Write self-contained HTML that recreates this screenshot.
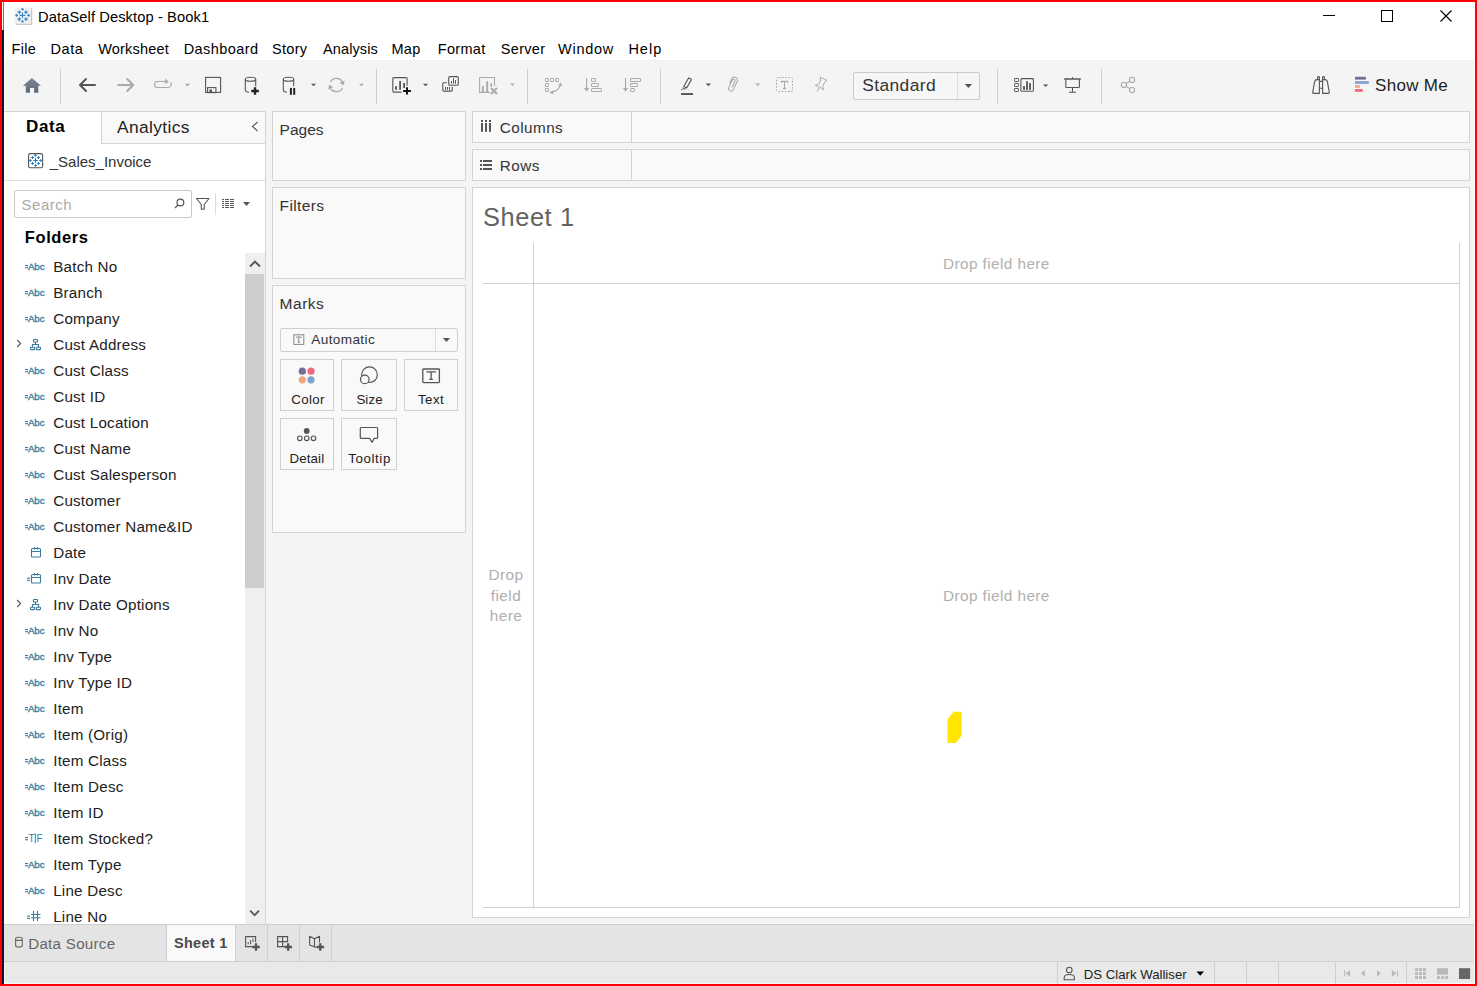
<!DOCTYPE html>
<html><head><meta charset="utf-8"><title>DataSelf Desktop - Book1</title>
<style>
html,body{margin:0;padding:0;}
body{width:1477px;height:986px;position:relative;overflow:hidden;font-family:"Liberation Sans", sans-serif;background:#fff;}
body>div{position:absolute;box-sizing:content-box;}
</style></head><body>
<div style="left:0px;top:0px;width:1477px;height:986px;background:#ffffff;"></div>
<div style="left:5px;top:60px;width:1469px;height:864px;background:#f4f4f4;"></div>
<div style="left:5px;top:60px;width:1469px;height:1px;background:#f0f0f0;"></div>
<svg style="position:absolute;left:14px;top:7px;" width="20" height="20" viewBox="0 0 20 20"><rect x="1.6" y="1.5" width="16.6" height="16.3" fill="#bdbdbd"/><rect x="0.6" y="0.5" width="16.6" height="16.3" fill="#f0f0f0"/><g stroke="#3f86c0" stroke-width="1.1"><path d="M8.5 5.6 V11.2 M5.7 8.4 H11.3"/></g><g stroke="#3f86c0" stroke-width="1.2"><path d="M8.5 0.9999999999999998 V3.5999999999999996 M7.2 2.3 H9.8"/><path d="M8.5 13.2 V15.8 M7.2 14.5 H9.8"/><path d="M2.6 7.1000000000000005 V9.700000000000001 M1.3 8.4 H3.9000000000000004"/><path d="M14.6 7.1000000000000005 V9.700000000000001 M13.299999999999999 8.4 H15.9"/><path d="M5.3 3.4000000000000004 V7.0 M3.5 5.2 H7.1"/><path d="M12 3.4000000000000004 V7.0 M10.2 5.2 H13.8"/><path d="M5.3 10.299999999999999 V13.9 M3.5 12.1 H7.1"/><path d="M12 10.299999999999999 V13.9 M10.2 12.1 H13.8"/></g></svg>
<div style="left:38px;top:9.90px;font-size:14.7px;line-height:1;color:#000;font-weight:400;white-space:nowrap;letter-spacing:0.09px;">DataSelf Desktop - Book1</div>
<svg style="position:absolute;left:1322px;top:8px;" width="14" height="14" viewBox="0 0 14 14"><rect x="1" y="7" width="12" height="1" fill="#000"/></svg>
<svg style="position:absolute;left:1380px;top:9px;" width="14" height="14" viewBox="0 0 14 14"><rect x="1.5" y="1.5" width="11" height="11" fill="none" stroke="#000" stroke-width="1"/></svg>
<svg style="position:absolute;left:1439px;top:9px;" width="14" height="14" viewBox="0 0 14 14"><path d="M1.5 1.5 L12.5 12.5 M12.5 1.5 L1.5 12.5" stroke="#000" stroke-width="1.1"/></svg>
<div style="left:11.5px;top:41.88px;font-size:14.5px;line-height:1;color:#000;font-weight:400;white-space:nowrap;letter-spacing:0.3px;">File</div>
<div style="left:50.5px;top:41.88px;font-size:14.5px;line-height:1;color:#000;font-weight:400;white-space:nowrap;letter-spacing:0.6px;">Data</div>
<div style="left:98.2px;top:41.88px;font-size:14.5px;line-height:1;color:#000;font-weight:400;white-space:nowrap;letter-spacing:0.2px;">Worksheet</div>
<div style="left:183.70000000000002px;top:41.88px;font-size:14.5px;line-height:1;color:#000;font-weight:400;white-space:nowrap;letter-spacing:0.42px;">Dashboard</div>
<div style="left:272.0px;top:41.88px;font-size:14.5px;line-height:1;color:#000;font-weight:400;white-space:nowrap;letter-spacing:0.3px;">Story</div>
<div style="left:323.0px;top:41.88px;font-size:14.5px;line-height:1;color:#000;font-weight:400;white-space:nowrap;letter-spacing:0.12px;">Analysis</div>
<div style="left:391.40000000000003px;top:41.88px;font-size:14.5px;line-height:1;color:#000;font-weight:400;white-space:nowrap;letter-spacing:0.3px;">Map</div>
<div style="left:437.8px;top:41.88px;font-size:14.5px;line-height:1;color:#000;font-weight:400;white-space:nowrap;letter-spacing:0.3px;">Format</div>
<div style="left:500.8px;top:41.88px;font-size:14.5px;line-height:1;color:#000;font-weight:400;white-space:nowrap;letter-spacing:0.3px;">Server</div>
<div style="left:558.0999999999999px;top:41.88px;font-size:14.5px;line-height:1;color:#000;font-weight:400;white-space:nowrap;letter-spacing:0.72px;">Window</div>
<div style="left:628.4px;top:41.88px;font-size:14.5px;line-height:1;color:#000;font-weight:400;white-space:nowrap;letter-spacing:1.0px;">Help</div>
<div style="left:60px;top:69px;width:1px;height:35px;background:#d0d0d0;"></div>
<div style="left:376px;top:69px;width:1px;height:35px;background:#d0d0d0;"></div>
<div style="left:527px;top:69px;width:1px;height:35px;background:#d0d0d0;"></div>
<div style="left:660px;top:69px;width:1px;height:35px;background:#d0d0d0;"></div>
<div style="left:997px;top:69px;width:1px;height:35px;background:#d0d0d0;"></div>
<div style="left:1101px;top:69px;width:1px;height:35px;background:#d0d0d0;"></div>
<svg style="position:absolute;left:0px;top:0px;" width="1477" height="112" viewBox="0 0 1477 112"><defs><linearGradient id="hg" x1="0" y1="0" x2="0" y2="1"><stop offset="0" stop-color="#7b8896"/><stop offset="1" stop-color="#5d6a78"/></linearGradient></defs><path d="M31.9 78 L41 85.7 H38.3 V92.8 H34.1 V88 H30 V92.8 H25.8 V85.7 H22.9 Z" fill="url(#hg)"/><path d="M95 85 H80.5 M86 79 L80 85 L86 91" fill="none" stroke="#555" stroke-width="2" stroke-linecap="round" stroke-linejoin="round"/><path d="M118.2 85 H132.7 M127.2 79 L133.2 85 L127.2 91" fill="none" stroke="#aaa" stroke-width="2" stroke-linecap="round" stroke-linejoin="round"/><path d="M163 81.5 H157.5 A3 3 0 0 0 157.5 87.5 H168.5 A3 3 0 0 0 170.5 82.5" fill="none" stroke="#aaa" stroke-width="1.2"/><path d="M165.3 78.6 L168.5 81.5 L165.3 84.4 Z" fill="#aaa"/><path d="M162 81.5 H166" stroke="#aaa" stroke-width="1.2"/><path d="M184.8 83.8 H190.2 L187.5 86.42499999999998 Z" fill="#aaa"/><rect x="205.6" y="77.4" width="15" height="15" fill="none" stroke="#555" stroke-width="1.1"/><rect x="207.6" y="87.6" width="8.3" height="5" fill="none" stroke="#555" stroke-width="1.1"/><rect x="209.5" y="89.5" width="2.5" height="3" fill="#555"/><ellipse cx="250.5" cy="79.2" rx="5.2" ry="2" fill="none" stroke="#555" stroke-width="1.1"/><path d="M245.3 79.2 V89.7 Q245.3 92.0 249 92.2" fill="none" stroke="#555" stroke-width="1.1"/><path d="M255.7 79.2 V86.2" fill="none" stroke="#555" stroke-width="1.1"/><path d="M255 87.3 V94.8 M251.2 91 H258.8" stroke="#222" stroke-width="2.4"/><ellipse cx="288.5" cy="79.2" rx="5.2" ry="2" fill="none" stroke="#555" stroke-width="1.1"/><path d="M283.3 79.2 V89.7 Q283.3 92.0 287 92.2" fill="none" stroke="#555" stroke-width="1.1"/><path d="M293.7 79.2 V86.2" fill="none" stroke="#555" stroke-width="1.1"/><rect x="289.9" y="87.9" width="2" height="6.9" fill="#222"/><rect x="293.2" y="87.9" width="2" height="6.9" fill="#222"/><path d="M311 83.8 H316 L313.5 86.27499999999999 Z" fill="#555"/><path d="M330.3 82 A7 7 0 0 1 342.3 81.5 M342.5 88 A7 7 0 0 1 330.5 88.6" fill="none" stroke="#aaa" stroke-width="1.2"/><path d="M344.7 80.5 L343.5 85.5 L339.5 82.7 Z M328 89.5 L329.3 84.5 L333.2 87.3 Z" fill="#aaa"/><path d="M359 83.8 H364 L361.5 86.27499999999999 Z" fill="#aaa"/><path d="M401.7 92.1 H393.8 Q392.8 92.1 392.8 91.1 V78.6 Q392.8 77.6 393.8 77.6 H406.1 Q407.1 77.6 407.1 78.6 V85.7" fill="none" stroke="#555" stroke-width="1.1"/><rect x="395.1" y="86.2" width="1.8" height="3.6" fill="#555"/><rect x="399.2" y="81.1" width="1.8" height="8.7" fill="#555"/><rect x="403.2" y="82.9" width="1.8" height="5.2" fill="#555"/><path d="M407 87.2 V94.6 M403.1 90.9 H410.9" stroke="#111" stroke-width="2"/><path d="M422.9 83.8 H428.1 L425.5 86.35000000000001 Z" fill="#555"/><rect x="448.7" y="76.6" width="9.6" height="8.6" rx="1.3" fill="none" stroke="#555" stroke-width="1.1"/><path d="M451.5 81.1 V83.7 M453.5 78.3 V83.7 M455.5 80.1 V83.7" stroke="#555" stroke-width="1"/><path d="M446.9 82.7 H443.8 Q442.8 82.7 442.8 83.7 V90.1 Q442.8 91.1 443.8 91.1 H451.3 Q452.3 91.1 452.3 90.1 V87" fill="none" stroke="#555" stroke-width="1.1"/><path d="M445.5 87 V89.8 M447.5 87 V89.8 M449.5 87 V89.8" stroke="#555" stroke-width="1"/><path d="M490 92.4 H479.6 V77.5 H494.5 V86" fill="none" stroke="#aaa" stroke-width="1.1"/><rect x="482" y="86" width="1.8" height="6" fill="#aaa"/><rect x="486.2" y="81.3" width="1.9" height="10.7" fill="#aaa"/><rect x="490.4" y="83.2" width="1.6" height="3.5" fill="#aaa"/><path d="M491 88 L497 94 M497 88 L491 94" stroke="#aaa" stroke-width="2"/><path d="M510.1 83.6 H515 L512.55 86.03749999999998 Z" fill="#aaa"/><rect x="545.5" y="78.5" width="3" height="3" rx="0.4" fill="none" stroke="#aaa" stroke-width="1"/><rect x="550.5" y="78.5" width="3" height="3" rx="0.4" fill="none" stroke="#aaa" stroke-width="1"/><rect x="555.5" y="78.5" width="3" height="3" rx="0.4" fill="none" stroke="#aaa" stroke-width="1"/><rect x="545.5" y="83.5" width="3" height="3" rx="0.4" fill="none" stroke="#aaa" stroke-width="1"/><rect x="545.5" y="88.5" width="3" height="3" rx="0.4" fill="none" stroke="#aaa" stroke-width="1"/><path d="M551.5 92.3 Q558 91 560.3 85.5" fill="none" stroke="#aaa" stroke-width="1.1"/><path d="M562.3 86 L560.5 82.3 L558.3 85.5 Z M549.5 92.8 L553 90.3 L553.2 94.3 Z" fill="#aaa"/><path d="M586.6 78 V89" stroke="#aaa" stroke-width="1.1"/><path d="M584 88 H589.2 L586.6 91.8 Z" fill="#aaa"/><rect x="591.5" y="78.5" width="4" height="3" rx="0.5" fill="none" stroke="#aaa" stroke-width="1"/><rect x="591.5" y="83.5" width="7" height="3" rx="0.5" fill="none" stroke="#aaa" stroke-width="1"/><rect x="591.5" y="88.5" width="10" height="3" rx="0.5" fill="none" stroke="#aaa" stroke-width="1"/><path d="M625.5 78 V89" stroke="#aaa" stroke-width="1.1"/><path d="M622.9 88 H628.1 L625.5 91.8 Z" fill="#aaa"/><rect x="630.5" y="78.5" width="10" height="3" rx="0.5" fill="none" stroke="#aaa" stroke-width="1"/><rect x="630.5" y="83.5" width="7" height="3" rx="0.5" fill="none" stroke="#aaa" stroke-width="1"/><rect x="630.5" y="88.5" width="4" height="3" rx="0.5" fill="none" stroke="#aaa" stroke-width="1"/><g transform="rotate(30 687.7 82.85)"><rect x="686.1" y="77.85" width="3.2" height="10" rx="0.4" fill="none" stroke="#555" stroke-width="1.1"/><path d="M685.6 89.6 H689" stroke="#555" stroke-width="1.2"/><circle cx="686" cy="91.7" r="0.7" fill="#555"/></g><rect x="681" y="93.1" width="12" height="1.9" fill="#555"/><path d="M705.8 83.6 H711 L708.4 86.15 Z" fill="#555"/><path transform="rotate(25 733 84.5)" d="M733.5 87.5 V81 A1.5 1.5 0 0 0 730.5 81 V89 A2.5 2.5 0 0 0 735.5 89 V80 A3 3 0 0 0 729.5 80 V85" fill="none" stroke="#aaa" stroke-width="1"/><path d="M755.2 83.6 H760.2 L757.7 86.07499999999999 Z" fill="#aaa"/><rect x="776.5" y="77.5" width="16" height="14" rx="1.5" fill="none" stroke="#aaa" stroke-width="1" stroke-dasharray="1.6 1.6" stroke-dashoffset="-0.8"/><path d="M781.4 83 V81.4 H787.6 V83 M784.5 81.4 V88.6 M783 88.6 H786" fill="none" stroke="#aaa" stroke-width="1.1"/><path d="M820.3 77.2 L827 80.4 L825.2 81.3 L822.6 86.3 L823.7 89.8 L819.8 87.2 L815.3 85.4 L819 84.1 L820.5 81.1 Z M819.4 87.6 L817.2 91.7" fill="none" stroke="#aaa" stroke-width="1" stroke-linejoin="round"/><g fill="none" stroke="#555" stroke-width="1.1"><rect x="1014.5" y="78.5" width="4" height="3" rx="0.6" stroke-width="1"/><rect x="1014.5" y="83.5" width="4" height="3" rx="0.6" stroke-width="1"/><rect x="1014.5" y="88.5" width="4" height="3" rx="0.6" stroke-width="1"/><rect x="1020.9" y="78.6" width="12.5" height="12.7" rx="0.9"/></g><rect x="1023.1" y="86.1" width="1.8" height="3.8" fill="#555"/><rect x="1026.1" y="81.2" width="1.8" height="8.7" fill="#555"/><rect x="1029.1" y="83.1" width="1.8" height="6.8" fill="#555"/><path d="M1043 84.5 H1048.2 L1045.6 87.05000000000001 Z" fill="#555"/><rect x="1064.1" y="78.2" width="16.8" height="1.6" rx="0.5" fill="#555"/><path d="M1072.5 77 V78.5" stroke="#555" stroke-width="1"/><path d="M1065.8 79.6 V86.7 Q1065.8 87.5 1066.6 87.5 H1078.6 Q1079.4 87.5 1079.4 86.7 V79.6 M1072.5 87.5 V92.3 M1068.9 92.3 H1076" fill="none" stroke="#555" stroke-width="1.1"/><g fill="none" stroke="#aaa" stroke-width="1.1"><circle cx="1132.1" cy="79.9" r="2.6"/><circle cx="1123.9" cy="84.9" r="2.6"/><circle cx="1132.1" cy="90.1" r="2.6"/><path d="M1126.2 83.5 L1129.8 81.3 M1126.2 86.3 L1129.8 88.6"/></g><g fill="none" stroke="#555" stroke-width="1.1" stroke-linejoin="round"><path d="M1319.4 93.4 H1313.6 Q1312.5 93.4 1312.7 92.3 L1314.6 81.6 Q1315.1 79.6 1317 79.6 H1319.4 Z"/><rect x="1317.6" y="76.6" width="1.8" height="3" rx="0.9"/><path d="M1319.4 81.4 H1322.6 M1319.4 88.2 H1322.6"/><path d="M1322.6 93.4 H1328.4 Q1329.5 93.4 1329.3 92.3 L1327.4 81.6 Q1326.9 79.6 1325 79.6 H1322.6 Z"/><rect x="1322.6" y="76.6" width="1.8" height="3" rx="0.9"/></g><rect x="1355" y="76.8" width="10.9" height="2.8" fill="#7a6a98"/><rect x="1355" y="81.1" width="13.8" height="2.8" fill="#85a3cc"/><rect x="1355" y="85.2" width="4.8" height="2.6" fill="#f0a57a"/><rect x="1355" y="89" width="7.8" height="2.8" fill="#f0697c"/></svg>
<div style="left:853px;top:72px;width:125px;height:26px;background:#f6f6f6;border:1px solid #cbcbcb;border-radius:2px;"></div>
<div style="left:957px;top:73px;width:1px;height:26px;background:#dcdcdc;"></div>
<div style="left:862.2px;top:77.21px;font-size:17.4px;line-height:1;color:#333;font-weight:400;white-space:nowrap;letter-spacing:0.4px;">Standard</div>
<svg style="position:absolute;left:960px;top:80px;" width="16" height="10" viewBox="0 0 16 10"><path d="M4.8 3.9 H12 L8.4 7.9 Z" fill="#555"/></svg>
<div style="left:1375px;top:76.95px;font-size:17px;line-height:1;color:#222;font-weight:400;white-space:nowrap;letter-spacing:0.3px;">Show Me</div>
<div style="left:4px;top:111px;width:262px;height:813px;background:#ffffff;"></div>
<div style="left:4px;top:111px;width:262px;height:1px;background:#d4d4d4;"></div>
<div style="left:265px;top:111px;width:1px;height:813px;background:#d4d4d4;"></div>
<div style="left:101px;top:112px;width:164px;height:32px;background:#f9f9f9;"></div>
<div style="left:101px;top:111px;width:1px;height:33px;background:#d4d4d4;"></div>
<div style="left:101px;top:143px;width:164px;height:1px;background:#d4d4d4;"></div>
<div style="left:26px;top:118.45px;font-size:17px;line-height:1;color:#000;font-weight:700;white-space:nowrap;letter-spacing:0.6px;">Data</div>
<div style="left:117px;top:118.81px;font-size:17.4px;line-height:1;color:#222;font-weight:400;white-space:nowrap;letter-spacing:0.36px;">Analytics</div>
<div style="left:49.7px;top:153.75px;font-size:15px;line-height:1;color:#333;font-weight:400;white-space:nowrap;">_Sales_Invoice</div>
<div style="left:4px;top:180px;width:261px;height:1px;background:#e0e0e0;"></div>
<div style="left:14px;top:190px;width:176px;height:26px;background:#fff;border:1px solid #c8c8c8;border-radius:2px;"></div>
<div style="left:21.6px;top:196.65px;font-size:15px;line-height:1;color:#aaa;font-weight:400;white-space:nowrap;letter-spacing:0.5px;">Search</div>
<div style="left:24.8px;top:228.97px;font-size:16.5px;line-height:1;color:#000;font-weight:700;white-space:nowrap;letter-spacing:0.6px;">Folders</div>
<div style="left:245px;top:253px;width:20px;height:671px;background:#efefef;"></div>
<div style="left:245px;top:274px;width:19px;height:314px;background:#cdcdcd;"></div>
<div style="left:0px;top:0px;width:1477px;height:924px;overflow:hidden;clip-path:inset(250px 1232px 0 4px)"><svg style="position:absolute;left:24px;top:258px" width="22" height="16" viewBox="0 0 22 16"><rect x="1" y="7" width="3" height="1.1" fill="#3a7c9c"/><rect x="1" y="9.2" width="3" height="1.1" fill="#3a7c9c"/><text x="3.9" y="11.9" font-family="Liberation Sans" font-size="9.8" letter-spacing="-0.1" fill="#3a7c9c" stroke="#3a7c9c" stroke-width="0.35">Abc</text></svg><div style="position:absolute;left:53.2px;top:259.08px;font-size:15.2px;line-height:1;color:#222;white-space:nowrap;letter-spacing:0.22px">Batch No</div><svg style="position:absolute;left:24px;top:284px" width="22" height="16" viewBox="0 0 22 16"><rect x="1" y="7" width="3" height="1.1" fill="#3a7c9c"/><rect x="1" y="9.2" width="3" height="1.1" fill="#3a7c9c"/><text x="3.9" y="11.9" font-family="Liberation Sans" font-size="9.8" letter-spacing="-0.1" fill="#3a7c9c" stroke="#3a7c9c" stroke-width="0.35">Abc</text></svg><div style="position:absolute;left:53.2px;top:285.08px;font-size:15.2px;line-height:1;color:#222;white-space:nowrap;letter-spacing:0.22px">Branch</div><svg style="position:absolute;left:24px;top:310px" width="22" height="16" viewBox="0 0 22 16"><rect x="1" y="7" width="3" height="1.1" fill="#3a7c9c"/><rect x="1" y="9.2" width="3" height="1.1" fill="#3a7c9c"/><text x="3.9" y="11.9" font-family="Liberation Sans" font-size="9.8" letter-spacing="-0.1" fill="#3a7c9c" stroke="#3a7c9c" stroke-width="0.35">Abc</text></svg><div style="position:absolute;left:53.2px;top:311.08px;font-size:15.2px;line-height:1;color:#222;white-space:nowrap;letter-spacing:0.22px">Company</div><svg style="position:absolute;left:14px;top:336px" width="30" height="16" viewBox="0 0 30 16"><path d="M3.2 4 L6.6 7.5 L3.2 11" fill="none" stroke="#555" stroke-width="1.1"/><g fill="none" stroke="#3a7c9c" stroke-width="1.1"><rect x="19.5" y="3.5" width="4" height="2.5" rx="0.6"/><path d="M21.5 6 V8.5 M18.5 11 V8.5 H24.5 V11"/><rect x="16.5" y="11.2" width="4.2" height="2.4" rx="0.6"/><rect x="22.3" y="11.2" width="4.2" height="2.4" rx="0.6"/></g></svg><div style="position:absolute;left:53.2px;top:337.08px;font-size:15.2px;line-height:1;color:#222;white-space:nowrap;letter-spacing:0.22px">Cust Address</div><svg style="position:absolute;left:24px;top:362px" width="22" height="16" viewBox="0 0 22 16"><rect x="1" y="7" width="3" height="1.1" fill="#3a7c9c"/><rect x="1" y="9.2" width="3" height="1.1" fill="#3a7c9c"/><text x="3.9" y="11.9" font-family="Liberation Sans" font-size="9.8" letter-spacing="-0.1" fill="#3a7c9c" stroke="#3a7c9c" stroke-width="0.35">Abc</text></svg><div style="position:absolute;left:53.2px;top:363.08px;font-size:15.2px;line-height:1;color:#222;white-space:nowrap;letter-spacing:0.22px">Cust Class</div><svg style="position:absolute;left:24px;top:388px" width="22" height="16" viewBox="0 0 22 16"><rect x="1" y="7" width="3" height="1.1" fill="#3a7c9c"/><rect x="1" y="9.2" width="3" height="1.1" fill="#3a7c9c"/><text x="3.9" y="11.9" font-family="Liberation Sans" font-size="9.8" letter-spacing="-0.1" fill="#3a7c9c" stroke="#3a7c9c" stroke-width="0.35">Abc</text></svg><div style="position:absolute;left:53.2px;top:389.08px;font-size:15.2px;line-height:1;color:#222;white-space:nowrap;letter-spacing:0.22px">Cust ID</div><svg style="position:absolute;left:24px;top:414px" width="22" height="16" viewBox="0 0 22 16"><rect x="1" y="7" width="3" height="1.1" fill="#3a7c9c"/><rect x="1" y="9.2" width="3" height="1.1" fill="#3a7c9c"/><text x="3.9" y="11.9" font-family="Liberation Sans" font-size="9.8" letter-spacing="-0.1" fill="#3a7c9c" stroke="#3a7c9c" stroke-width="0.35">Abc</text></svg><div style="position:absolute;left:53.2px;top:415.08px;font-size:15.2px;line-height:1;color:#222;white-space:nowrap;letter-spacing:0.22px">Cust Location</div><svg style="position:absolute;left:24px;top:440px" width="22" height="16" viewBox="0 0 22 16"><rect x="1" y="7" width="3" height="1.1" fill="#3a7c9c"/><rect x="1" y="9.2" width="3" height="1.1" fill="#3a7c9c"/><text x="3.9" y="11.9" font-family="Liberation Sans" font-size="9.8" letter-spacing="-0.1" fill="#3a7c9c" stroke="#3a7c9c" stroke-width="0.35">Abc</text></svg><div style="position:absolute;left:53.2px;top:441.08px;font-size:15.2px;line-height:1;color:#222;white-space:nowrap;letter-spacing:0.22px">Cust Name</div><svg style="position:absolute;left:24px;top:466px" width="22" height="16" viewBox="0 0 22 16"><rect x="1" y="7" width="3" height="1.1" fill="#3a7c9c"/><rect x="1" y="9.2" width="3" height="1.1" fill="#3a7c9c"/><text x="3.9" y="11.9" font-family="Liberation Sans" font-size="9.8" letter-spacing="-0.1" fill="#3a7c9c" stroke="#3a7c9c" stroke-width="0.35">Abc</text></svg><div style="position:absolute;left:53.2px;top:467.08px;font-size:15.2px;line-height:1;color:#222;white-space:nowrap;letter-spacing:0.22px">Cust Salesperson</div><svg style="position:absolute;left:24px;top:492px" width="22" height="16" viewBox="0 0 22 16"><rect x="1" y="7" width="3" height="1.1" fill="#3a7c9c"/><rect x="1" y="9.2" width="3" height="1.1" fill="#3a7c9c"/><text x="3.9" y="11.9" font-family="Liberation Sans" font-size="9.8" letter-spacing="-0.1" fill="#3a7c9c" stroke="#3a7c9c" stroke-width="0.35">Abc</text></svg><div style="position:absolute;left:53.2px;top:493.08px;font-size:15.2px;line-height:1;color:#222;white-space:nowrap;letter-spacing:0.22px">Customer</div><svg style="position:absolute;left:24px;top:518px" width="22" height="16" viewBox="0 0 22 16"><rect x="1" y="7" width="3" height="1.1" fill="#3a7c9c"/><rect x="1" y="9.2" width="3" height="1.1" fill="#3a7c9c"/><text x="3.9" y="11.9" font-family="Liberation Sans" font-size="9.8" letter-spacing="-0.1" fill="#3a7c9c" stroke="#3a7c9c" stroke-width="0.35">Abc</text></svg><div style="position:absolute;left:53.2px;top:519.08px;font-size:15.2px;line-height:1;color:#222;white-space:nowrap;letter-spacing:0.22px">Customer Name&amp;ID</div><svg style="position:absolute;left:14px;top:544px" width="30" height="16" viewBox="0 0 30 16"><g fill="none" stroke="#3a7c9c" stroke-width="1.1"><rect x="17.5" y="4.5" width="9" height="8.5" rx="1"/><path d="M17.5 7.5 H26.5 M20.5 3 V5.5 M23.5 3 V5.5"/></g></svg><div style="position:absolute;left:53.2px;top:545.08px;font-size:15.2px;line-height:1;color:#222;white-space:nowrap;letter-spacing:0.22px">Date</div><svg style="position:absolute;left:14px;top:570px" width="30" height="16" viewBox="0 0 30 16"><rect x="13" y="7.6" width="3" height="1.1" fill="#3a7c9c"/><rect x="13" y="9.8" width="3" height="1.1" fill="#3a7c9c"/><g fill="none" stroke="#3a7c9c" stroke-width="1.1"><rect x="17.5" y="4.5" width="9" height="8.5" rx="1"/><path d="M17.5 7.5 H26.5 M20.5 3 V5.5 M23.5 3 V5.5"/></g></svg><div style="position:absolute;left:53.2px;top:571.08px;font-size:15.2px;line-height:1;color:#222;white-space:nowrap;letter-spacing:0.22px">Inv Date</div><svg style="position:absolute;left:14px;top:596px" width="30" height="16" viewBox="0 0 30 16"><path d="M3.2 4 L6.6 7.5 L3.2 11" fill="none" stroke="#555" stroke-width="1.1"/><g fill="none" stroke="#3a7c9c" stroke-width="1.1"><rect x="19.5" y="3.5" width="4" height="2.5" rx="0.6"/><path d="M21.5 6 V8.5 M18.5 11 V8.5 H24.5 V11"/><rect x="16.5" y="11.2" width="4.2" height="2.4" rx="0.6"/><rect x="22.3" y="11.2" width="4.2" height="2.4" rx="0.6"/></g></svg><div style="position:absolute;left:53.2px;top:597.08px;font-size:15.2px;line-height:1;color:#222;white-space:nowrap;letter-spacing:0.22px">Inv Date Options</div><svg style="position:absolute;left:24px;top:622px" width="22" height="16" viewBox="0 0 22 16"><rect x="1" y="7" width="3" height="1.1" fill="#3a7c9c"/><rect x="1" y="9.2" width="3" height="1.1" fill="#3a7c9c"/><text x="3.9" y="11.9" font-family="Liberation Sans" font-size="9.8" letter-spacing="-0.1" fill="#3a7c9c" stroke="#3a7c9c" stroke-width="0.35">Abc</text></svg><div style="position:absolute;left:53.2px;top:623.08px;font-size:15.2px;line-height:1;color:#222;white-space:nowrap;letter-spacing:0.22px">Inv No</div><svg style="position:absolute;left:24px;top:648px" width="22" height="16" viewBox="0 0 22 16"><rect x="1" y="7" width="3" height="1.1" fill="#3a7c9c"/><rect x="1" y="9.2" width="3" height="1.1" fill="#3a7c9c"/><text x="3.9" y="11.9" font-family="Liberation Sans" font-size="9.8" letter-spacing="-0.1" fill="#3a7c9c" stroke="#3a7c9c" stroke-width="0.35">Abc</text></svg><div style="position:absolute;left:53.2px;top:649.08px;font-size:15.2px;line-height:1;color:#222;white-space:nowrap;letter-spacing:0.22px">Inv Type</div><svg style="position:absolute;left:24px;top:674px" width="22" height="16" viewBox="0 0 22 16"><rect x="1" y="7" width="3" height="1.1" fill="#3a7c9c"/><rect x="1" y="9.2" width="3" height="1.1" fill="#3a7c9c"/><text x="3.9" y="11.9" font-family="Liberation Sans" font-size="9.8" letter-spacing="-0.1" fill="#3a7c9c" stroke="#3a7c9c" stroke-width="0.35">Abc</text></svg><div style="position:absolute;left:53.2px;top:675.08px;font-size:15.2px;line-height:1;color:#222;white-space:nowrap;letter-spacing:0.22px">Inv Type ID</div><svg style="position:absolute;left:24px;top:700px" width="22" height="16" viewBox="0 0 22 16"><rect x="1" y="7" width="3" height="1.1" fill="#3a7c9c"/><rect x="1" y="9.2" width="3" height="1.1" fill="#3a7c9c"/><text x="3.9" y="11.9" font-family="Liberation Sans" font-size="9.8" letter-spacing="-0.1" fill="#3a7c9c" stroke="#3a7c9c" stroke-width="0.35">Abc</text></svg><div style="position:absolute;left:53.2px;top:701.08px;font-size:15.2px;line-height:1;color:#222;white-space:nowrap;letter-spacing:0.22px">Item</div><svg style="position:absolute;left:24px;top:726px" width="22" height="16" viewBox="0 0 22 16"><rect x="1" y="7" width="3" height="1.1" fill="#3a7c9c"/><rect x="1" y="9.2" width="3" height="1.1" fill="#3a7c9c"/><text x="3.9" y="11.9" font-family="Liberation Sans" font-size="9.8" letter-spacing="-0.1" fill="#3a7c9c" stroke="#3a7c9c" stroke-width="0.35">Abc</text></svg><div style="position:absolute;left:53.2px;top:727.08px;font-size:15.2px;line-height:1;color:#222;white-space:nowrap;letter-spacing:0.22px">Item (Orig)</div><svg style="position:absolute;left:24px;top:752px" width="22" height="16" viewBox="0 0 22 16"><rect x="1" y="7" width="3" height="1.1" fill="#3a7c9c"/><rect x="1" y="9.2" width="3" height="1.1" fill="#3a7c9c"/><text x="3.9" y="11.9" font-family="Liberation Sans" font-size="9.8" letter-spacing="-0.1" fill="#3a7c9c" stroke="#3a7c9c" stroke-width="0.35">Abc</text></svg><div style="position:absolute;left:53.2px;top:753.08px;font-size:15.2px;line-height:1;color:#222;white-space:nowrap;letter-spacing:0.22px">Item Class</div><svg style="position:absolute;left:24px;top:778px" width="22" height="16" viewBox="0 0 22 16"><rect x="1" y="7" width="3" height="1.1" fill="#3a7c9c"/><rect x="1" y="9.2" width="3" height="1.1" fill="#3a7c9c"/><text x="3.9" y="11.9" font-family="Liberation Sans" font-size="9.8" letter-spacing="-0.1" fill="#3a7c9c" stroke="#3a7c9c" stroke-width="0.35">Abc</text></svg><div style="position:absolute;left:53.2px;top:779.08px;font-size:15.2px;line-height:1;color:#222;white-space:nowrap;letter-spacing:0.22px">Item Desc</div><svg style="position:absolute;left:24px;top:804px" width="22" height="16" viewBox="0 0 22 16"><rect x="1" y="7" width="3" height="1.1" fill="#3a7c9c"/><rect x="1" y="9.2" width="3" height="1.1" fill="#3a7c9c"/><text x="3.9" y="11.9" font-family="Liberation Sans" font-size="9.8" letter-spacing="-0.1" fill="#3a7c9c" stroke="#3a7c9c" stroke-width="0.35">Abc</text></svg><div style="position:absolute;left:53.2px;top:805.08px;font-size:15.2px;line-height:1;color:#222;white-space:nowrap;letter-spacing:0.22px">Item ID</div><svg style="position:absolute;left:24px;top:830px" width="22" height="16" viewBox="0 0 22 16"><rect x="1" y="7" width="3" height="1.1" fill="#3a7c9c"/><rect x="1" y="9.2" width="3" height="1.1" fill="#3a7c9c"/><text x="4.5" y="12" font-family="Liberation Sans" font-size="10" fill="#3a7c9c">T</text><rect x="10.8" y="3.2" width="1" height="10" fill="#3a7c9c"/><text x="12.6" y="12" font-family="Liberation Sans" font-size="10" fill="#3a7c9c">F</text></svg><div style="position:absolute;left:53.2px;top:831.08px;font-size:15.2px;line-height:1;color:#222;white-space:nowrap;letter-spacing:0.22px">Item Stocked?</div><svg style="position:absolute;left:24px;top:856px" width="22" height="16" viewBox="0 0 22 16"><rect x="1" y="7" width="3" height="1.1" fill="#3a7c9c"/><rect x="1" y="9.2" width="3" height="1.1" fill="#3a7c9c"/><text x="3.9" y="11.9" font-family="Liberation Sans" font-size="9.8" letter-spacing="-0.1" fill="#3a7c9c" stroke="#3a7c9c" stroke-width="0.35">Abc</text></svg><div style="position:absolute;left:53.2px;top:857.08px;font-size:15.2px;line-height:1;color:#222;white-space:nowrap;letter-spacing:0.22px">Item Type</div><svg style="position:absolute;left:24px;top:882px" width="22" height="16" viewBox="0 0 22 16"><rect x="1" y="7" width="3" height="1.1" fill="#3a7c9c"/><rect x="1" y="9.2" width="3" height="1.1" fill="#3a7c9c"/><text x="3.9" y="11.9" font-family="Liberation Sans" font-size="9.8" letter-spacing="-0.1" fill="#3a7c9c" stroke="#3a7c9c" stroke-width="0.35">Abc</text></svg><div style="position:absolute;left:53.2px;top:883.08px;font-size:15.2px;line-height:1;color:#222;white-space:nowrap;letter-spacing:0.22px">Line Desc</div><svg style="position:absolute;left:24px;top:908px" width="22" height="16" viewBox="0 0 22 16"><rect x="3" y="7.6" width="3" height="1.1" fill="#3a7c9c"/><rect x="3" y="9.8" width="3" height="1.1" fill="#3a7c9c"/><path d="M9.5 3 V13 M13.5 3 V13 M7 6.5 H16.5 M7 9.8 H16.5" stroke="#3a7c9c" stroke-width="1.1" fill="none"/></svg><div style="position:absolute;left:53.2px;top:909.08px;font-size:15.2px;line-height:1;color:#222;white-space:nowrap;letter-spacing:0.22px">Line No</div></div>
<svg style="position:absolute;left:245px;top:253px;" width="20" height="21" viewBox="0 0 20 21"><path d="M5 13.5 L10 8.5 L15 13.5" fill="none" stroke="#555" stroke-width="1.8"/></svg>
<svg style="position:absolute;left:245px;top:903px;" width="20" height="21" viewBox="0 0 20 21"><path d="M5.2 7.6 L9.6 12.3 L14 7.6" fill="none" stroke="#555" stroke-width="1.8"/></svg>
<svg style="position:absolute;left:27px;top:152px;" width="18" height="18" viewBox="0 0 18 18"><rect x="1.6" y="1.6" width="14" height="14.2" rx="1.5" fill="#fff" stroke="#555" stroke-width="1.1"/><g stroke="#2f7fc0" stroke-width="1"><path d="M8.5 6.1 V10.9 M6.1 8.5 H10.9"/><path d="M8.5 1.9 V4.699999999999999 M7.1 3.3 H9.9"/><path d="M8.5 12.2 V15.0 M7.1 13.6 H9.9"/><path d="M3.4 7.1 V9.9 M2.0 8.5 H4.8"/><path d="M13.6 7.1 V9.9 M12.2 8.5 H15.0"/><path d="M5.5 4.0 V7.0 M4.0 5.5 H7.0"/><path d="M11.5 4.0 V7.0 M10.0 5.5 H13.0"/><path d="M5.5 10.0 V13.0 M4.0 11.5 H7.0"/><path d="M11.5 10.0 V13.0 M10.0 11.5 H13.0"/></g></svg>
<svg style="position:absolute;left:172px;top:196px;" width="14" height="14" viewBox="0 0 14 14"><circle cx="8.4" cy="6.5" r="3.4" fill="none" stroke="#555" stroke-width="1.2"/><path d="M6 9 L3 12" stroke="#555" stroke-width="1.3"/></svg>
<svg style="position:absolute;left:194px;top:196px;" width="18" height="16" viewBox="0 0 18 16"><path d="M2.5 2.5 H15 L10.2 8.5 V13.2 H7.3 V8.5 Z" fill="none" stroke="#555" stroke-width="1.1" stroke-linejoin="round"/></svg>
<div style="left:215px;top:193px;width:1px;height:22px;background:#dcdcdc;"></div>
<svg style="position:absolute;left:221px;top:198px;" width="14" height="11" viewBox="0 0 14 11"><rect x="1" y="1" width="2" height="1" fill="#555"/><rect x="4" y="1" width="4" height="1" fill="#555"/><rect x="9" y="1" width="4" height="1" fill="#555"/><rect x="1" y="3" width="2" height="1" fill="#555"/><rect x="4" y="3" width="4" height="1" fill="#555"/><rect x="9" y="3" width="4" height="1" fill="#555"/><rect x="1" y="5" width="2" height="1" fill="#555"/><rect x="4" y="5" width="4" height="1" fill="#555"/><rect x="9" y="5" width="4" height="1" fill="#555"/><rect x="1" y="7" width="2" height="1" fill="#555"/><rect x="4" y="7" width="4" height="1" fill="#555"/><rect x="9" y="7" width="4" height="1" fill="#555"/><rect x="1" y="9" width="2" height="1" fill="#555"/><rect x="4" y="9" width="4" height="1" fill="#555"/><rect x="9" y="9" width="4" height="1" fill="#555"/></svg>
<svg style="position:absolute;left:242px;top:201px;" width="9" height="6" viewBox="0 0 9 6"><path d="M1 1 H8 L4.5 5 Z" fill="#555"/></svg>
<svg style="position:absolute;left:249px;top:120px;" width="12" height="13" viewBox="0 0 12 13"><path d="M8.5 2 L3.5 6.5 L8.5 11" fill="none" stroke="#555" stroke-width="1.1"/></svg>
<div style="left:272px;top:111px;width:192px;height:68px;background:#f9f9f9;border:1px solid #d4d4d4;"></div>
<div style="left:279.6px;top:122.23px;font-size:15.5px;line-height:1;color:#333;font-weight:400;white-space:nowrap;">Pages</div>
<div style="left:272px;top:187px;width:192px;height:90px;background:#f9f9f9;border:1px solid #d4d4d4;"></div>
<div style="left:279.6px;top:198.22px;font-size:15.5px;line-height:1;color:#333;font-weight:400;white-space:nowrap;letter-spacing:0.35px;">Filters</div>
<div style="left:272px;top:285px;width:192px;height:246px;background:#f9f9f9;border:1px solid #d4d4d4;"></div>
<div style="left:279.6px;top:296.22px;font-size:15.5px;line-height:1;color:#333;font-weight:400;white-space:nowrap;letter-spacing:0.5px;">Marks</div>
<div style="left:472px;top:111px;width:996px;height:30px;background:#f9f9f9;border:1px solid #d4d4d4;"></div>
<div style="left:631px;top:112px;width:1px;height:30px;background:#d4d4d4;"></div>
<div style="left:499.7px;top:120.00px;font-size:15.3px;line-height:1;color:#333;font-weight:400;white-space:nowrap;letter-spacing:0.45px;">Columns</div>
<div style="left:472px;top:149px;width:996px;height:30px;background:#f9f9f9;border:1px solid #d4d4d4;"></div>
<div style="left:631px;top:150px;width:1px;height:30px;background:#d4d4d4;"></div>
<div style="left:499.7px;top:158.00px;font-size:15.3px;line-height:1;color:#333;font-weight:400;white-space:nowrap;letter-spacing:0.45px;">Rows</div>
<div style="left:472px;top:187px;width:996px;height:729px;background:#ffffff;border:1px solid #d4d4d4;"></div>
<div style="left:483px;top:204.61px;font-size:25.4px;line-height:1;color:#636363;font-weight:400;white-space:nowrap;letter-spacing:0.58px;">Sheet 1</div>
<svg style="position:absolute;left:478px;top:118px;" width="16" height="16" viewBox="0 0 16 16"><rect x="3" y="2" width="2" height="2" fill="#555"/><rect x="3" y="5" width="2" height="8.8" fill="#555"/><rect x="7" y="2" width="2" height="2" fill="#555"/><rect x="7" y="5" width="2" height="8.8" fill="#555"/><rect x="11" y="2" width="2" height="2" fill="#555"/><rect x="11" y="5" width="2" height="8.8" fill="#555"/></svg>
<svg style="position:absolute;left:478px;top:156px;" width="16" height="16" viewBox="0 0 16 16"><rect x="2" y="4" width="2" height="2" fill="#555"/><rect x="5" y="4" width="9" height="2" fill="#555"/><rect x="2" y="8" width="2" height="2" fill="#555"/><rect x="5" y="8" width="9" height="2" fill="#555"/><rect x="2" y="12" width="2" height="2" fill="#555"/><rect x="5" y="12" width="9" height="2" fill="#555"/></svg>
<div style="left:280px;top:328px;width:176px;height:22px;background:#f9f9f9;border:1px solid #d0d0d0;border-radius:2px;"></div>
<div style="left:435px;top:329px;width:1px;height:22px;background:#dcdcdc;"></div>
<svg style="position:absolute;left:292px;top:333px;" width="14" height="14" viewBox="0 0 14 14"><rect x="1.8" y="1.8" width="10" height="9.6" fill="none" stroke="#888" stroke-width="1"/><path d="M4.2 4.6 V4 H9.4 V4.6 M6.8 4 V9.2 M5.6 9.2 H8" fill="none" stroke="#888" stroke-width="1"/></svg>
<div style="left:311.3px;top:333.44px;font-size:13.6px;line-height:1;color:#333;font-weight:400;white-space:nowrap;letter-spacing:0.37px;">Automatic</div>
<svg style="position:absolute;left:440px;top:335px;" width="12" height="10" viewBox="0 0 12 10"><path d="M2.8 3 H10 L6.4 7 Z" fill="#555"/></svg>
<div style="left:280px;top:359px;width:52px;height:50px;background:#f9f9f9;border:1px solid #d0d0d0;"></div>
<div style="left:291.2px;top:393.30px;font-size:13.3px;line-height:1;color:#222;font-weight:400;white-space:nowrap;letter-spacing:0.37px;">Color</div>
<div style="left:341px;top:359px;width:54px;height:50px;background:#f9f9f9;border:1px solid #d0d0d0;"></div>
<div style="left:356.4px;top:393.30px;font-size:13.3px;line-height:1;color:#222;font-weight:400;white-space:nowrap;letter-spacing:0.1px;">Size</div>
<div style="left:404px;top:359px;width:52px;height:50px;background:#f9f9f9;border:1px solid #d0d0d0;"></div>
<div style="left:418.09999999999997px;top:393.30px;font-size:13.3px;line-height:1;color:#222;font-weight:400;white-space:nowrap;letter-spacing:0.37px;">Text</div>
<div style="left:280px;top:418px;width:52px;height:50px;background:#f9f9f9;border:1px solid #d0d0d0;"></div>
<div style="left:289.59999999999997px;top:452.30px;font-size:13.3px;line-height:1;color:#222;font-weight:400;white-space:nowrap;letter-spacing:0.1px;">Detail</div>
<div style="left:341px;top:418px;width:54px;height:50px;background:#f9f9f9;border:1px solid #d0d0d0;"></div>
<div style="left:348.2px;top:452.30px;font-size:13.3px;line-height:1;color:#222;font-weight:400;white-space:nowrap;letter-spacing:0.62px;">Tooltip</div>
<svg style="position:absolute;left:290px;top:362px;" width="30" height="26" viewBox="0 0 30 26"><circle cx="12.3" cy="9.2" r="3.6" fill="#7a6a98"/><circle cx="21" cy="9.2" r="3.6" fill="#f0697c"/><circle cx="12.3" cy="17.8" r="3.6" fill="#f0a57a"/><circle cx="21" cy="17.8" r="3.6" fill="#7ea3cb"/></svg>
<svg style="position:absolute;left:350px;top:362px;" width="30" height="26" viewBox="0 0 30 26"><circle cx="19.5" cy="12.7" r="7.8" fill="none" stroke="#555" stroke-width="1.2"/><circle cx="14.8" cy="17.4" r="4.3" fill="#f9f9f9" stroke="#555" stroke-width="1.2"/></svg>
<svg style="position:absolute;left:416px;top:362px;" width="30" height="26" viewBox="0 0 30 26"><rect x="6.8" y="7" width="16.6" height="13.6" rx="0.8" fill="none" stroke="#555" stroke-width="1.3"/><path d="M11 10.5 V9.8 H19.2 V10.5 M15.1 9.8 V17.4 M13.3 17.4 H16.9" fill="none" stroke="#555" stroke-width="1.3"/></svg>
<svg style="position:absolute;left:290px;top:421px;" width="30" height="26" viewBox="0 0 30 26"><circle cx="16.7" cy="9.9" r="2.9" fill="#555"/><circle cx="9.8" cy="17.3" r="2.3" fill="none" stroke="#555" stroke-width="1.1"/><circle cx="16.7" cy="17.3" r="2.3" fill="none" stroke="#555" stroke-width="1.1"/><circle cx="23.5" cy="17.3" r="2.3" fill="none" stroke="#555" stroke-width="1.1"/></svg>
<svg style="position:absolute;left:350px;top:421px;" width="30" height="26" viewBox="0 0 30 26"><path d="M11.3 6.5 H26.6 Q27.6 6.5 27.6 7.5 V16.4 Q27.6 17.4 26.6 17.4 H24 L22.3 21.3 L19.5 17.4 H11.3 Q10.3 17.4 10.3 16.4 V7.5 Q10.3 6.5 11.3 6.5 Z" fill="none" stroke="#555" stroke-width="1.2" stroke-linejoin="round"/></svg>
<div style="left:533px;top:243px;width:1px;height:665px;background:#d0d0d0;"></div>
<div style="left:483px;top:283px;width:977px;height:1px;background:#d0d0d0;"></div>
<div style="left:483px;top:907px;width:977px;height:1px;background:#d0d0d0;"></div>
<div style="left:1459px;top:243px;width:1px;height:665px;background:#d0d0d0;"></div>
<div style="left:943px;top:255.71px;font-size:15.4px;line-height:1;color:#b0b0b0;font-weight:400;white-space:nowrap;letter-spacing:0.39px;">Drop field here</div>
<div style="left:943px;top:588.11px;font-size:15.4px;line-height:1;color:#b0b0b0;font-weight:400;white-space:nowrap;letter-spacing:0.39px;">Drop field here</div>
<div style="left:481px;width:50px;text-align:center;top:567.31px;font-size:15.4px;line-height:1;color:#b0b0b0;letter-spacing:0.45px">Drop</div>
<div style="left:481px;width:50px;text-align:center;top:587.81px;font-size:15.4px;line-height:1;color:#b0b0b0;letter-spacing:0.45px">field</div>
<div style="left:481px;width:50px;text-align:center;top:608.31px;font-size:15.4px;line-height:1;color:#b0b0b0;letter-spacing:0.45px">here</div>
<svg style="position:absolute;left:945px;top:709px;" width="20" height="38" viewBox="0 0 20 38"><path d="M8.5 2.8 H16.7 V26.6 L10.8 33.9 H2.5 V10.6 Z" fill="#ffe500"/></svg>
<div style="left:4px;top:924px;width:1470px;height:37px;background:#e4e4e4;border-top:1px solid #cfcfcf;box-sizing:border-box;"></div>
<div style="left:4px;top:961px;width:1470px;height:22px;background:#e9e9e9;border-top:1px solid #cfcfcf;box-sizing:border-box;"></div>
<div style="left:4px;top:962px;width:1px;height:21px;background:#f7f7f7;"></div>
<div style="left:4px;top:983px;width:1471px;height:1px;background:#f2fbfb;"></div>
<div style="left:1474px;top:962px;width:1px;height:22px;background:#f2fbfb;"></div>
<div style="left:166px;top:925px;width:69px;height:36px;background:#f9f9f9;"></div>
<div style="left:166px;top:925px;width:1px;height:36px;background:#cfcfcf;"></div>
<div style="left:235px;top:925px;width:1px;height:36px;background:#cfcfcf;"></div>
<div style="left:267px;top:925px;width:1px;height:36px;background:#cfcfcf;"></div>
<div style="left:299px;top:925px;width:1px;height:36px;background:#cfcfcf;"></div>
<div style="left:331px;top:925px;width:1px;height:36px;background:#cfcfcf;"></div>
<svg style="position:absolute;left:13px;top:935px;" width="12" height="15" viewBox="0 0 12 15"><path d="M2.6 3.8 Q2.6 2.3 6 2.3 Q9.3 2.3 9.3 3.8 V10.6 Q9.3 12.1 6 12.1 Q2.6 12.1 2.6 10.6 Z M2.8 5.4 H9.1" fill="none" stroke="#666" stroke-width="1.1"/></svg>
<div style="left:28.2px;top:935.96px;font-size:15.1px;line-height:1;color:#666;font-weight:400;white-space:nowrap;letter-spacing:0.3px;">Data Source</div>
<div style="left:174px;top:936.07px;font-size:14.5px;line-height:1;color:#4a4a4a;font-weight:700;white-space:nowrap;letter-spacing:0.27px;">Sheet 1</div>
<svg style="position:absolute;left:240px;top:930px;" width="90" height="26" viewBox="0 0 90 26"><path d="M12.3 16.6 H5.6 V6.6 H15.6 V12.3" fill="none" stroke="#555" stroke-width="1.1"/><path d="M8.2 12 V14.3 M10.6 10 V14.3 M13 8.7 V12" stroke="#555" stroke-width="1"/><path d="M16 13.2 V20.8 M12.2 17 H19.8" stroke="#555" stroke-width="2.3"/><path d="M44.3 16.6 H37.6 V6.6 H47.6 V12.3 M37.6 11.6 H47.6 M42.6 6.6 V16.6" fill="none" stroke="#555" stroke-width="1.1"/><path d="M48.2 13.2 V20.8 M44.4 17 H52" stroke="#555" stroke-width="2.3"/><path d="M76 17.5 L69.6 15 V6.3 L74.5 8.8 L79.5 6.3 V12.5 M74.5 8.8 V17.8" fill="none" stroke="#555" stroke-width="1.1" stroke-linejoin="round"/><path d="M80.3 13.2 V20.8 M76.5 17 H84.1" stroke="#555" stroke-width="2.3"/></svg>
<div style="left:1057px;top:962px;width:1px;height:22px;background:#cfcfcf;"></div>
<div style="left:1214px;top:962px;width:1px;height:22px;background:#cfcfcf;"></div>
<div style="left:1246px;top:962px;width:1px;height:22px;background:#cfcfcf;"></div>
<div style="left:1278px;top:962px;width:1px;height:22px;background:#cfcfcf;"></div>
<div style="left:1335px;top:962px;width:1px;height:22px;background:#cfcfcf;"></div>
<div style="left:1406px;top:962px;width:1px;height:22px;background:#cfcfcf;"></div>
<svg style="position:absolute;left:1061px;top:964px;" width="16" height="18" viewBox="0 0 16 18"><circle cx="8.3" cy="6" r="2.8" fill="none" stroke="#555" stroke-width="1.1"/><path d="M3.2 15.8 V13.5 Q3.2 10.5 8.3 10.5 Q13.4 10.5 13.4 13.5 V15.8 Z" fill="none" stroke="#555" stroke-width="1.1"/></svg>
<div style="left:1083.8px;top:968.18px;font-size:13.2px;line-height:1;color:#222;font-weight:400;white-space:nowrap;">DS Clark Walliser</div>
<svg style="position:absolute;left:1194px;top:969px;" width="12" height="9" viewBox="0 0 12 9"><path d="M2.5 2.6 H10 L6.2 6.8 Z" fill="#000"/></svg>
<svg style="position:absolute;left:1340px;top:964px;" width="134" height="18" viewBox="0 0 134 18"><g fill="#bbb"><rect x="4.1" y="6" width="1" height="6.7"/><path d="M10.2 6 V12.7 L5.5 9.35 Z"/><path d="M24.9 6 V12.7 L20.8 9.35 Z"/><path d="M37 6 V12.7 L41 9.35 Z"/><path d="M51.9 6 V12.7 L56.7 9.35 Z"/><rect x="57.1" y="6" width="1" height="6.7"/></g><g fill="#b8b8b8"><rect x="75.10" y="4.20" width="2.9" height="2.9"/><rect x="75.10" y="8.15" width="2.9" height="2.9"/><rect x="75.10" y="12.10" width="2.9" height="2.9"/><rect x="79.05" y="4.20" width="2.9" height="2.9"/><rect x="79.05" y="8.15" width="2.9" height="2.9"/><rect x="79.05" y="12.10" width="2.9" height="2.9"/><rect x="83.00" y="4.20" width="2.9" height="2.9"/><rect x="83.00" y="8.15" width="2.9" height="2.9"/><rect x="83.00" y="12.10" width="2.9" height="2.9"/></g><g fill="#b8b8b8"><rect x="97" y="4.2" width="11" height="6.4"/><rect x="97.00" y="12.2" width="2.9" height="2.7"/><rect x="101.05" y="12.2" width="2.9" height="2.7"/><rect x="105.10" y="12.2" width="2.9" height="2.7"/></g><rect x="119" y="4.2" width="11.1" height="10.8" fill="#666"/></svg>
<div style="left:2px;top:30px;width:2px;height:954px;background:#001a33;"></div>
<div style="left:3px;top:2px;width:1px;height:28px;background:#777;"></div>
<div style="left:0px;top:0px;width:1477px;height:986px;background:transparent;border:2px solid #ff0000;box-sizing:border-box;"></div>
</body></html>
